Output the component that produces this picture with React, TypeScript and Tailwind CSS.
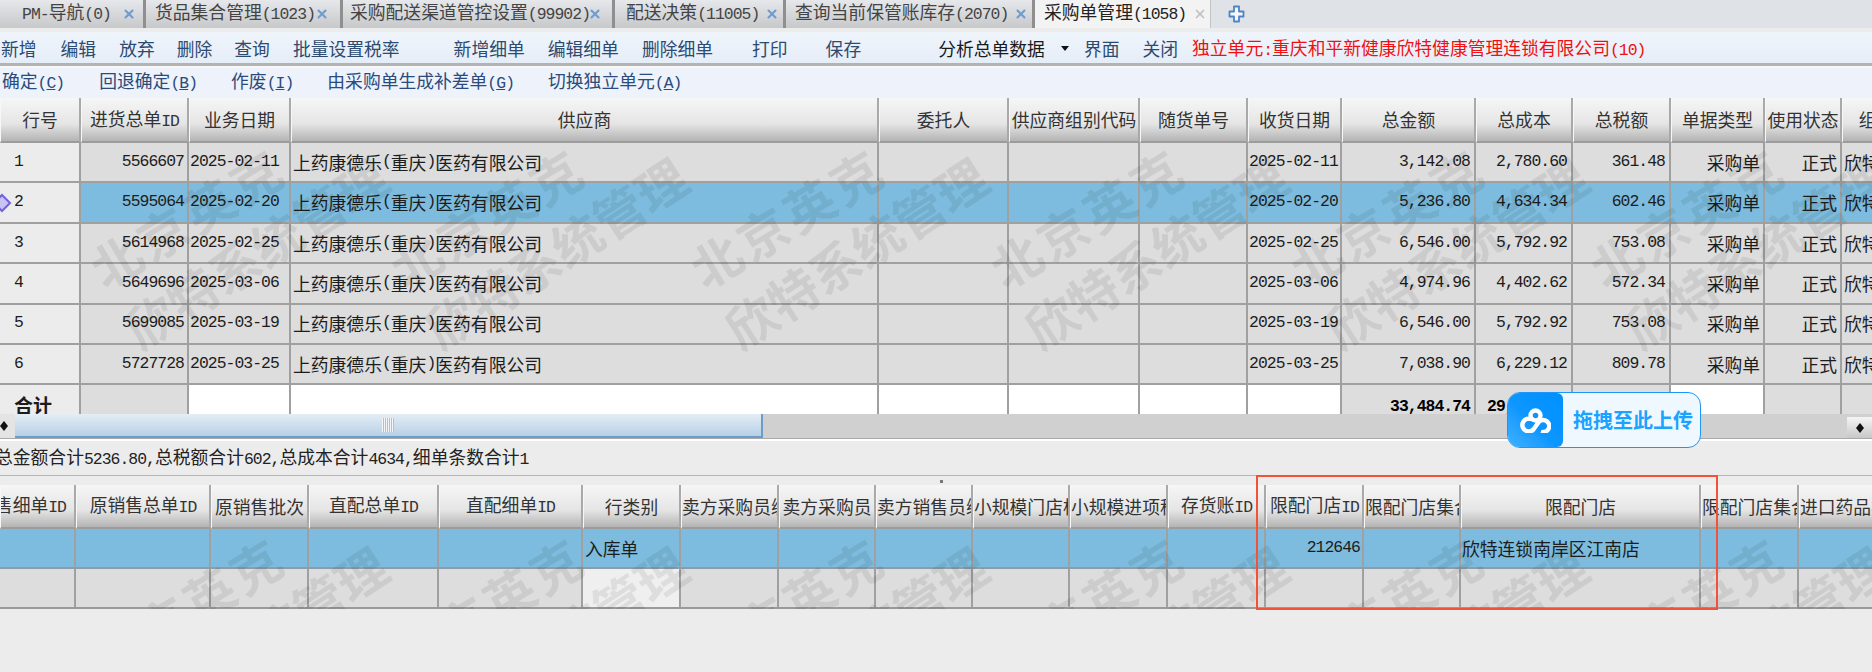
import React from "react";
import { X } from "lucide-react";

const mono = "font-['Liberation_Mono',monospace] text-[16.4px] tracking-[-0.95px]";

function T({ s }: { s: string }) {
  const parts = s.split(/([\x00-\x7f]+)/).filter(Boolean);
  return (
    <>
      {parts.map((p, i) =>
        /^[\x00-\x7f]+$/.test(p) ? (
          <span key={i} className={mono}>
            {p}
          </span>
        ) : (
          <span key={i}>{p}</span>
        ),
      )}
    </>
  );
}

const tabs = [
  { t: "PM-导航(0)", w: 146, pl: 22, x: 11 },
  { t: "货品集合管理(1023)", w: 197, pl: 9, x: 0 },
  { t: "采购配送渠道管控设置(99902)", w: 272, pl: 7, x: -2 },
  { t: "配送决策(11005)", w: 171, pl: 11, x: 6 },
  { t: "查询当前保管账库存(2070)", w: 249, pl: 9, x: 6 },
];

function TabBar() {
  return (
    <div className="flex h-[32px] bg-[#dfe2e6] border-b-4 border-b-[#ececec] text-[#444] text-[17.8px] overflow-hidden">
      {tabs.map((tab) => (
        <div
          key={tab.t}
          style={{ width: tab.w, paddingLeft: tab.pl }}
          className="h-full flex items-center shrink-0 whitespace-nowrap bg-linear-to-b from-[#e6e8eb] to-[#c6c8ca] border-r-[3px] border-r-[#8f8f8f]"
        >
          <span className="relative top-[-1px]">
            <T s={tab.t} />
          </span>
          <X style={{ marginLeft: tab.x }} size={14} strokeWidth={3.6} className="text-[#6f9ccf] shrink-0" />
        </div>
      ))}
      <div className="h-full w-[176px] shrink-0 flex items-center pl-[9px] whitespace-nowrap bg-[#f3f3f3] border-r border-r-[#c4c4c4] text-[#222]">
        <span className="relative top-[-1px]">
          <T s="采购单管理(1058)" />
        </span>
        <X size={14} strokeWidth={3} className="text-[#c0c0c0] ml-[7px] shrink-0" />
      </div>
      <div className="flex items-center ml-[17px]">
        <svg width="17" height="18" viewBox="0 0 17 18">
          <path
            d="M6 1.5h5v5h4.5v5H11v5H6v-5H1.5v-5H6z"
            fill="#f4f7fb"
            stroke="#4f83c4"
            strokeWidth="1.8"
            strokeLinejoin="round"
          />
        </svg>
      </div>
    </div>
  );
}

const tb1 = [
  ["新增", 1],
  ["编辑", 24],
  ["放弃", 23],
  ["删除", 22],
  ["查询", 22],
  ["批量设置税率", 23],
  ["新增细单", 54],
  ["编辑细单", 23],
  ["删除细单", 23],
  ["打印", 39],
  ["保存", 38],
] as const;

function Toolbar1() {
  return (
    <div className="flex items-center h-[31px] pt-[2px] bg-linear-to-b from-[#f0f5fc] to-[#e5edf7] text-[17.8px] text-[#2d4a70] whitespace-nowrap">
      {tb1.map(([t, m]) => (
        <span key={t} style={{ marginLeft: m }}>
          {t}
        </span>
      ))}
      <span className="ml-[77px] text-[#1a1a1a]">分析总单数据</span>
      <span className="ml-[16px] w-0 h-0 border-x-[4px] border-x-transparent border-t-[5px] border-t-[#111]" />
      <span className="ml-[15px]">界面</span>
      <span className="ml-[23px]">关闭</span>
      <span className="ml-[14px] text-[#f01010]">
        <T s="独立单元:重庆和平新健康欣特健康管理连锁有限公司(10)" />
      </span>
    </div>
  );
}

function Acc({ t, k, ml }: { t: string; k: string; ml: number }) {
  return (
    <span style={{ marginLeft: ml }}>
      {t}
      <span className={mono}>
        (<span className="underline">{k}</span>)
      </span>
    </span>
  );
}

function Toolbar2() {
  return (
    <div className="flex items-center h-[32px] pb-[3px] bg-[#edf2fb] text-[17.8px] text-[#2a4b7c] whitespace-nowrap border-t-2 border-t-[#f7f7f7]">
      <Acc t="确定" k="C" ml={2} />
      <Acc t="回退确定" k="B" ml={35} />
      <Acc t="作废" k="I" ml={34} />
      <Acc t="由采购单生成补差单" k="G" ml={34} />
      <Acc t="切换独立单元" k="A" ml={34} />
    </div>
  );
}

function Watermark({ dy }: { dy: number }) {
  const xs = [94, 394, 694, 994, 1294, 1594];
  return (
    <div className="absolute inset-0 pointer-events-none overflow-hidden text-[50px] font-bold leading-none text-black/[0.075] whitespace-nowrap">
      {xs.map((x) => (
        <React.Fragment key={x}>
          <span style={{ left: x, top: 123 + dy }} className="absolute origin-left -rotate-[31deg] -translate-y-1/2 tracking-[4px]">
            北京英克
          </span>
          <span style={{ left: x + 35, top: 184 + dy }} className="absolute origin-left -rotate-[33deg] -translate-y-1/2">
            欣特系统管理
          </span>
        </React.Fragment>
      ))}
    </div>
  );
}

type HeadCol = { t: string; w: number; a?: "s" | "e" };

function HeaderRow({ cols, h }: { cols: HeadCol[]; h: string }) {
  return (
    <div className={`flex ${h} shrink-0 text-[17.8px] text-[#333] whitespace-nowrap`}>
      {cols.map((c, i) => (
        <div
          key={i}
          style={{ width: c.w }}
          className={`shrink-0 h-full flex items-center overflow-hidden bg-linear-to-b from-[#f6f6f6] via-[#e5e5e5] via-60% to-[#b4b4b4] border-r-2 border-r-[#a9a9a9] border-b-2 border-b-[#9c9c9c] border-l border-l-[#f7f7f7] ${
            c.a === "s" ? "justify-start" : c.a === "e" ? "justify-end pr-[8px]" : "justify-center"
          }`}
        >
          <span className="shrink-0">
            <T s={c.t} />
          </span>
        </div>
      ))}
    </div>
  );
}

const topW = [81, 108, 102, 588, 130, 131, 108, 94, 134, 97, 98, 94, 77, 70];
const topHead = [
  "行号",
  "进货总单ID",
  "业务日期",
  "供应商",
  "委托人",
  "供应商组别代码",
  "随货单号",
  "收货日期",
  "总金额",
  "总成本",
  "总税额",
  "单据类型",
  "使用状态",
  "组织",
].map((t, i) => ({ t, w: topW[i] }));

const rows = [
  ["1", "5566607", "2025-02-11", "2025-02-11", "3,142.08", "2,780.60", "361.48"],
  ["2", "5595064", "2025-02-20", "2025-02-20", "5,236.80", "4,634.34", "602.46"],
  ["3", "5614968", "2025-02-25", "2025-02-25", "6,546.00", "5,792.92", "753.08"],
  ["4", "5649696", "2025-03-06", "2025-03-06", "4,974.96", "4,402.62", "572.34"],
  ["5", "5699085", "2025-03-19", "2025-03-19", "6,546.00", "5,792.92", "753.08"],
  ["6", "5727728", "2025-03-25", "2025-03-25", "7,038.90", "6,229.12", "809.78"],
];

function Cell({
  w,
  bg,
  align = "l",
  pad = 1,
  children,
}: {
  w: number;
  bg: string;
  align?: "l" | "r";
  pad?: number;
  children?: React.ReactNode;
}) {
  return (
    <div
      style={{ width: w, paddingLeft: align === "l" ? pad : 0, paddingRight: align === "r" ? pad : 0 }}
      className={`shrink-0 h-full flex items-center overflow-hidden whitespace-nowrap border-r-2 border-r-[#a0a0a0] ${bg} ${
        align === "r" ? "justify-end" : "justify-start"
      }`}
    >
      {children}
    </div>
  );
}

function DataRow({ r }: { r: string[] }) {
  const sel = r[0] === "2";
  const bg = sel ? "bg-[#7dbcde]" : "bg-[#dddddd]";
  return (
    <div className="flex h-[40.4px] shrink-0 border-b-2 border-b-[#a0a0a0] text-[17.8px] text-[#1c1c1c]">
      <Cell w={topW[0]} bg="bg-[#ececec]" pad={14}>
        {sel && (
          <svg className="absolute left-[-8px]" width="20" height="20" viewBox="0 0 20 20">
            <path d="M10 2l8 8-8 8-8-8z" fill="#c9c4f5" stroke="#6f63dc" strokeWidth="2" />
          </svg>
        )}
        <span className={mono}>{r[0]}</span>
      </Cell>
      <Cell w={topW[1]} bg={bg} align="r" pad={3}>
        <span className={mono}>{r[1]}</span>
      </Cell>
      <Cell w={topW[2]} bg={bg} pad={1}>
        <span className={mono}>{r[2]}</span>
      </Cell>
      <Cell w={topW[3]} bg={bg} pad={2}>
        <T s="上药康德乐(重庆)医药有限公司" />
      </Cell>
      <Cell w={topW[4]} bg={bg} />
      <Cell w={topW[5]} bg={bg} />
      <Cell w={topW[6]} bg={bg} />
      <Cell w={topW[7]} bg={bg} pad={1}>
        <span className={mono}>{r[3]}</span>
      </Cell>
      <Cell w={topW[8]} bg={bg} align="r" pad={4}>
        <span className={mono}>{r[4]}</span>
      </Cell>
      <Cell w={topW[9]} bg={bg} align="r" pad={4}>
        <span className={mono}>{r[5]}</span>
      </Cell>
      <Cell w={topW[10]} bg={bg} align="r" pad={4}>
        <span className={mono}>{r[6]}</span>
      </Cell>
      <Cell w={topW[11]} bg={bg} align="r" pad={3}>
        采购单
      </Cell>
      <Cell w={topW[12]} bg={bg} align="r" pad={3}>
        正式
      </Cell>
      <Cell w={topW[13]} bg={bg} pad={2}>
        欣特连锁
      </Cell>
    </div>
  );
}

function TotalRow() {
  const g = "bg-[#dddddd]";
  const w = "bg-white";
  const boldMono = `${mono} font-bold text-black`;
  return (
    <div className="flex h-[40px] shrink-0 text-[17.8px] text-[#1c1c1c]">
      <Cell w={topW[0]} bg="bg-[#ececec]" pad={14}>
        <span className="font-bold text-[19px]">合计</span>
      </Cell>
      <Cell w={topW[1]} bg={g} />
      <Cell w={topW[2]} bg={w} />
      <Cell w={topW[3]} bg={w} />
      <Cell w={topW[4]} bg={w} />
      <Cell w={topW[5]} bg={w} />
      <Cell w={topW[6]} bg={w} />
      <Cell w={topW[7]} bg={w} />
      <Cell w={topW[8]} bg={g} align="r" pad={4}>
        <span className={`${boldMono} relative top-[2px]`}>33,484.74</span>
      </Cell>
      <Cell w={topW[9]} bg={g} align="r" pad={4}>
        <span className={`${boldMono} relative top-[2px]`}>29,632.22</span>
      </Cell>
      <Cell w={topW[10]} bg={g} />
      <Cell w={topW[11]} bg={w} />
      <Cell w={topW[12]} bg={g} />
      <Cell w={topW[13]} bg={g} />
    </div>
  );
}

function TopTable() {
  return (
    <div className="h-[316px] overflow-hidden flex flex-col">
      <HeaderRow cols={topHead} h="h-[45px]" />
      <div className="relative flex flex-col">
        {rows.map((r) => (
          <DataRow key={r[0]} r={r} />
        ))}
        <TotalRow />
        <Watermark dy={6} />
      </div>
    </div>
  );
}

function Diamond({ className }: { className?: string }) {
  return (
    <svg className={className} width="10" height="12" viewBox="0 0 10 12">
      <path d="M5 1l4 5-4 5-4-5z" fill="#111" />
    </svg>
  );
}

function Scrollbar() {
  return (
    <div className="flex h-[25px] bg-[#d0d0d0] border-b border-b-[#a9a9a9]">
      <div className="w-[15px] flex items-center justify-center bg-[#e4e4e4] overflow-hidden">
        <Diamond className="relative left-[-4px]" />
      </div>
      <div className="w-[748px] h-full flex items-center justify-center bg-linear-to-b from-[#e4edf6] to-[#b7d0e6] border-b-2 border-r-2 border-[#6e9cc8]">
        <div className="w-[12px] h-[14px] bg-[repeating-linear-gradient(90deg,#f4f6f9_0,#f4f6f9_1px,#bdbdbd_1px,#bdbdbd_2px)]" />
      </div>
      <div className="ml-auto mt-[3px] w-[25px] h-[21px] flex items-center justify-center bg-linear-to-b from-[#f5f5f5] to-[#c8c8c8]">
        <Diamond />
      </div>
    </div>
  );
}

function StatusBar() {
  return (
    <div className="h-[37px] flex items-center bg-[#ececec] border-t-2 border-t-white border-b border-b-[#b5b5b5] text-[17.8px] text-[#222] whitespace-nowrap overflow-hidden">
      <span className="ml-[-5px]">
        <T s="总金额合计5236.80,总税额合计602,总成本合计4634,细单条数合计1" />
      </span>
    </div>
  );
}

function Splitter() {
  return (
    <div className="h-[9px] bg-[#ececec] flex items-center justify-center">
      <div className="w-[3px] h-[3px] bg-[#777] relative left-[5px] top-[1px]" />
    </div>
  );
}

const botCols: { t: string; w: number; a?: "s" | "e" }[] = [
  { t: "售细单ID", w: 76, a: "e" },
  { t: "原销售总单ID", w: 135 },
  { t: "原销售批次", w: 98 },
  { t: "直配总单ID", w: 130 },
  { t: "直配细单ID", w: 144 },
  { t: "行类别", w: 98 },
  { t: "卖方采购员编", w: 98, a: "s" },
  { t: "卖方采购员", w: 97 },
  { t: "卖方销售员编", w: 97, a: "s" },
  { t: "小规模门店标", w: 97, a: "s" },
  { t: "小规模进项税", w: 98, a: "s" },
  { t: "存货账ID", w: 98 },
  { t: "限配门店ID", w: 98 },
  { t: "限配门店集合", w: 97, a: "s" },
  { t: "限配门店", w: 240 },
  { t: "限配门店集合", w: 98, a: "s" },
  { t: "进口药品标志", w: 120, a: "s" },
];

function BottomTable() {
  return (
    <div className="flex flex-col">
      <HeaderRow cols={botCols} h="h-[44px]" />
      <div className="relative flex flex-col h-[80px]">
        <div className="flex h-[40px] border-b-2 border-b-[#8f9ca5] text-[17.8px] text-[#1c1c1c]">
          {botCols.map((c, i) => (
            <Cell
              key={i}
              w={c.w}
              bg="bg-[#7dbcde]"
              align={i === 12 ? "r" : "l"}
              pad={i === 12 ? 2 : i === 5 ? 2 : 1}
            >
              {i === 5 && "入库单"}
              {i === 12 && <span className={mono}>212646</span>}
              {i === 14 && "欣特连锁南岸区江南店"}
            </Cell>
          ))}
        </div>
        <div className="flex h-[40px] border-b-2 border-b-[#9a9a9a]">
          {botCols.map((c, i) => (
            <Cell key={i} w={c.w} bg={i === 5 ? "bg-[#efefef]" : "bg-[#dddddd]"} />
          ))}
        </div>
        <Watermark dy={9} />
      </div>
    </div>
  );
}

function DropBlob() {
  return (
    <div className="absolute left-[1507px] top-[392px] w-[194px] h-[56px] flex items-stretch rounded-[13px] border border-[#1e96f5] bg-[#eff8ff] overflow-hidden">
      <div className="w-[55px] shrink-0 flex items-center justify-center rounded-r-[6px] bg-linear-to-tr from-[#3cb2ff] via-[#0c96ff] via-45% to-[#0090ff]">
        <svg width="31" height="25" viewBox="0 0 31 25" fill="none" stroke="#fff" strokeWidth="4.4">
          <circle cx="15.5" cy="7.5" r="5" />
          <path d="M12 11l-3-.4a6.4 6.4 0 1 0 4.6 10.6l5-7a6 6 0 1 1 4.3 9.8" strokeLinecap="round" />
        </svg>
      </div>
      <div className="flex-1 flex items-center pl-[10px] text-[20px] font-bold text-[#1aa3ff] whitespace-nowrap">
        拖拽至此上传
      </div>
    </div>
  );
}

export default function App() {
  return (
    <div className="relative w-[1872px] h-[672px] overflow-hidden bg-[#ececec] font-['Noto_Sans_CJK_SC',sans-serif]">
      <TabBar />
      <Toolbar1 />
      <div className="h-[3px] bg-[#b3b3b3]" />
      <Toolbar2 />
      <TopTable />
      <Scrollbar />
      <StatusBar />
      <Splitter />
      <BottomTable />
      <DropBlob />
      <div className="absolute left-[1256px] top-[475px] w-[462px] h-[135px] border-2 border-[#f0533a] pointer-events-none" />
    </div>
  );
}
